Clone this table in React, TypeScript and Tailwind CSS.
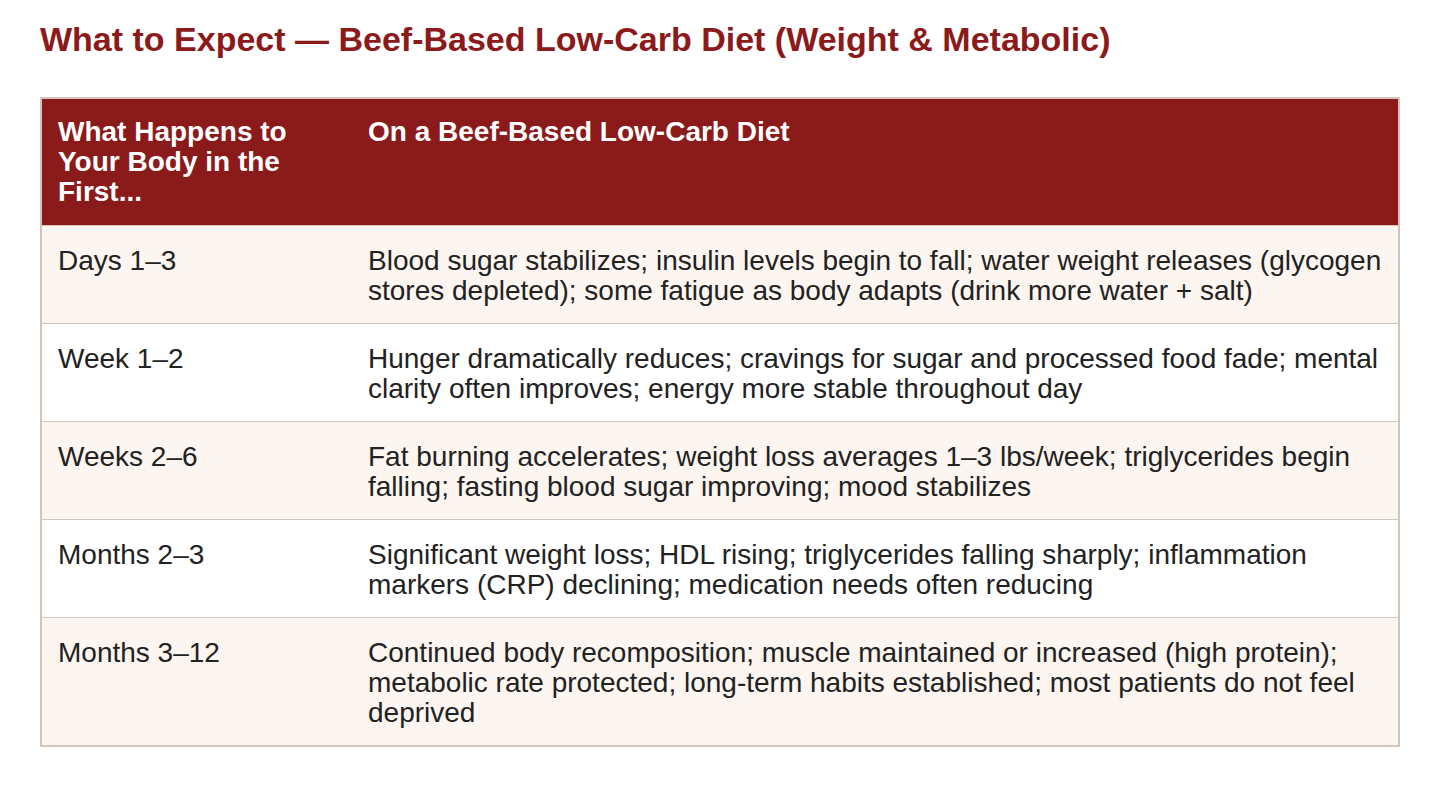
import React from "react";

const rows: [string, string][] = [
  ["Days 1–3", "Blood sugar stabilizes; insulin levels begin to fall; water weight releases (glycogen stores depleted); some fatigue as body adapts (drink more water + salt)"],
  ["Week 1–2", "Hunger dramatically reduces; cravings for sugar and processed food fade; mental clarity often improves; energy more stable throughout day"],
  ["Weeks 2–6", "Fat burning accelerates; weight loss averages 1–3 lbs/week; triglycerides begin falling; fasting blood sugar improving; mood stabilizes"],
  ["Months 2–3", "Significant weight loss; HDL rising; triglycerides falling sharply; inflammation markers (CRP) declining; medication needs often reducing"],
  ["Months 3–12", "Continued body recomposition; muscle maintained or increased (high protein); metabolic rate protected; long-term habits established; most patients do not feel deprived"],
];

export default function App() {
  return (
    <div className="min-h-screen bg-white px-[40px] pt-[20px]" style={{ fontFamily: '"Liberation Sans", Arial, sans-serif' }}>
      <h1 className="text-[34px] font-bold leading-[39px] text-[#8b1a1a]">
        What to Expect — Beef-Based Low-Carb Diet (Weight &amp; Metabolic)
      </h1>
      <table className="mt-[38px] w-[1360px] border-collapse border-2 border-[#d3c5b9] text-[28px] leading-[30px]">
        <thead>
          <tr className="bg-[#8b1b1b] text-white">
            <th className="w-[311px] py-[18px] pl-[16px] pr-[16px] text-left align-top font-bold">
              What Happens to Your Body in the First...
            </th>
            <th className="py-[18px] pl-[16px] pr-[16px] text-left align-top font-bold">
              On a Beef-Based Low-Carb Diet
            </th>
          </tr>
        </thead>
        <tbody>
          {rows.map(([a, b], i) => (
            <tr key={i} className={`border-t border-[#d3c5b9] text-[#222222] ${i % 2 === 0 ? "bg-[#fcf5f0]" : "bg-white"}`}>
              <td className="pt-[20px] pb-[17px] pl-[16px] pr-[16px] align-top">{a}</td>
              <td className="pt-[20px] pb-[17px] pl-[16px] pr-[16px] align-top">{b}</td>
            </tr>
          ))}
        </tbody>
      </table>
    </div>
  );
}
